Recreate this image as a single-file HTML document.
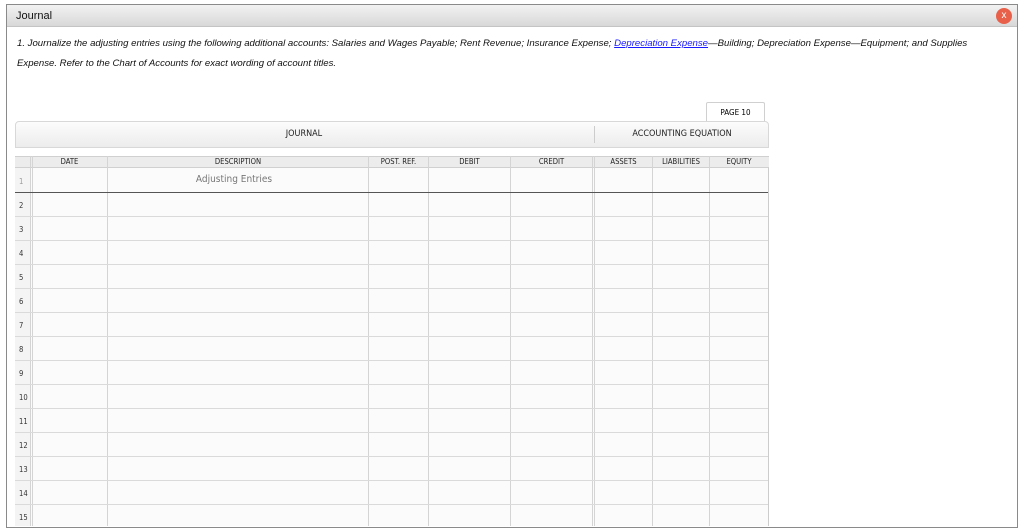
<!DOCTYPE html>
<html><head><meta charset="utf-8"><style>
*{margin:0;padding:0;box-sizing:border-box}
body{width:1024px;height:526px;background:#fff;position:relative;overflow:hidden;font-family:"Liberation Sans",sans-serif}
.abs{position:absolute}
#win{left:6px;top:4px;width:1012px;height:524px;border:1px solid #8a8a8a;background:#fff}
#bar{left:7px;top:5px;width:1010px;height:22px;background:linear-gradient(#f2f2f2,#d8d8d8);border-bottom:1px solid #c4c4c4}
#bar span{position:absolute;left:9px;top:5px;font-size:11px;color:#111}
#x{left:996px;top:8px;width:16px;height:16px;border-radius:50%;background:#e8604a;color:#fff;font-size:10px;text-align:center;line-height:16px}
.q{left:17px;font-size:9.6px;font-style:italic;color:#111;white-space:nowrap}
.q a{color:#1a1aff;text-decoration:underline}
.vl{position:absolute;width:1px;background:#d4d4d4;top:156px;height:370px}
.hl{position:absolute;height:1px;background:#dadada;left:15px;width:753px}
.hd{position:absolute;top:157px;height:10px;font-size:7.6px;color:#222;text-align:center;line-height:10px}
.n{position:absolute;left:19px;font-size:7.6px;color:#333;font-family:"DejaVu Sans Condensed","Liberation Sans",sans-serif}
.sm{font-family:"DejaVu Sans Condensed","Liberation Sans",sans-serif}
</style></head><body>
<div id="win" class="abs"></div>
<div id="bar" class="abs"><span>Journal</span></div>
<div id="x" class="abs">x</div>
<div class="abs q" style="top:38px">1. Journalize the adjusting entries using the following additional accounts: Salaries and Wages Payable; Rent Revenue; Insurance Expense; <a>Depreciation Expense</a>—Building; Depreciation Expense—Equipment; and Supplies</div>
<div class="abs q" style="top:58px">Expense. Refer to the Chart of Accounts for exact wording of account titles.</div>

<div class="abs sm" style="left:706px;top:102px;width:59px;height:20px;border:1px solid #d0d0d0;border-bottom:none;background:#fff;font-size:8px;text-align:center;line-height:19px;border-radius:2px 2px 0 0">PAGE 10</div>
<div class="abs" style="left:15px;top:121px;width:754px;height:27px;border:1px solid #d8d8d8;border-radius:4px 4px 0 0;background:linear-gradient(#fcfcfc,#ececec)"></div>
<div class="abs sm" style="left:15px;top:129px;width:578px;text-align:center;font-size:9px;color:#222">JOURNAL</div>
<div class="abs" style="left:594px;top:126px;width:1px;height:17px;background:#ccc"></div>
<div class="abs sm" style="left:596px;top:129px;width:172px;text-align:center;font-size:9px;color:#222">ACCOUNTING EQUATION</div>

<div class="abs" style="left:15px;top:156px;width:754px;height:370px;background:#fbfbfb;border-left:1px solid #ccc;border-right:1px solid #ccc"></div>
<div class="abs" style="left:15px;top:156px;width:754px;height:12px;background:#ececec;border-top:1px solid #d0d0d0;border-bottom:1px solid #d0d0d0"></div>
<div class="abs" style="left:15px;top:168px;width:16px;height:358px;background:#f4f4f4"></div>

<div class="vl" style="left:30px"></div><div class="vl" style="left:32px"></div>
<div class="vl" style="left:107px"></div><div class="vl" style="left:368px"></div>
<div class="vl" style="left:428px"></div><div class="vl" style="left:510px"></div>
<div class="vl" style="left:592px"></div><div class="vl" style="left:594px"></div>
<div class="vl" style="left:652px"></div><div class="vl" style="left:709px"></div>

<div class="hd sm" style="left:32px;width:75px">DATE</div>
<div class="hd sm" style="left:108px;width:260px">DESCRIPTION</div>
<div class="hd sm" style="left:369px;width:59px">POST. REF.</div>
<div class="hd sm" style="left:429px;width:81px">DEBIT</div>
<div class="hd sm" style="left:511px;width:81px">CREDIT</div>
<div class="hd sm" style="left:595px;width:57px">ASSETS</div>
<div class="hd sm" style="left:653px;width:56px">LIABILITIES</div>
<div class="hd sm" style="left:710px;width:58px">EQUITY</div>

<div class="abs sm" style="left:108px;top:174px;width:252px;text-align:center;font-size:10px;color:#777">Adjusting Entries</div>

<div class="hl" style="top:192px;background:#555"></div>
<div class="hl" style="top:216px"></div><div class="hl" style="top:240px"></div>
<div class="hl" style="top:264px"></div><div class="hl" style="top:288px"></div>
<div class="hl" style="top:312px"></div><div class="hl" style="top:336px"></div>
<div class="hl" style="top:360px"></div><div class="hl" style="top:384px"></div>
<div class="hl" style="top:408px"></div><div class="hl" style="top:432px"></div>
<div class="hl" style="top:456px"></div><div class="hl" style="top:480px"></div>
<div class="hl" style="top:504px"></div>

<div class="n" style="top:177px;color:#999">1</div>
<div class="n" style="top:201px">2</div>
<div class="n" style="top:225px">3</div>
<div class="n" style="top:249px">4</div>
<div class="n" style="top:273px">5</div>
<div class="n" style="top:297px">6</div>
<div class="n" style="top:321px">7</div>
<div class="n" style="top:345px">8</div>
<div class="n" style="top:369px">9</div>
<div class="n" style="top:393px">10</div>
<div class="n" style="top:417px">11</div>
<div class="n" style="top:441px">12</div>
<div class="n" style="top:465px">13</div>
<div class="n" style="top:489px">14</div>
<div class="n" style="top:513px">15</div>
</body></html>
